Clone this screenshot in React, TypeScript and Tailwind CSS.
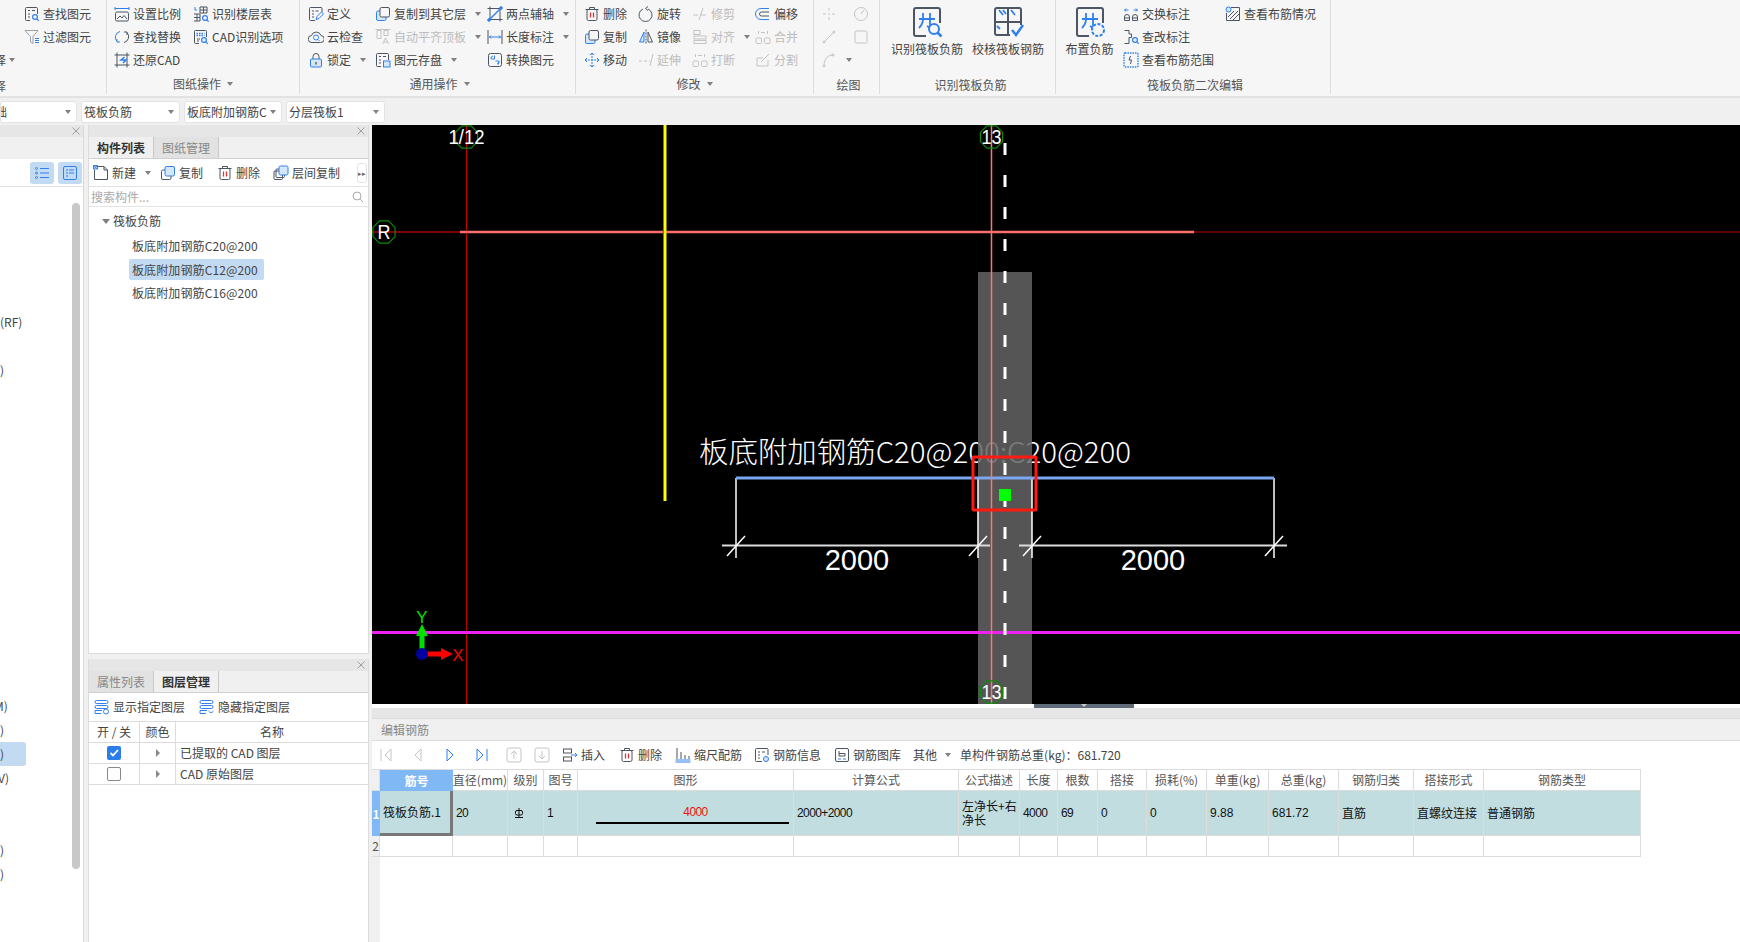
import React from "react";

const S = "#4b5563";
const B = "#2f80ed";
const G = "#c4c4c4";
const R = "#d9363e";

const Svg = ({ children, size = 16, stroke = S }: { children: React.ReactNode; size?: number; stroke?: string }) => (
  <svg width={size} height={size} viewBox="0 0 16 16" fill="none" stroke={stroke} strokeWidth={1} className="shrink-0">
    {children}
  </svg>
);

const Lens = ({ x = 11, y = 11 }: { x?: number; y?: number }) => (
  <g stroke={B} strokeWidth={1.2}>
    <circle cx={x} cy={y} r={2.4} fill="#f5f5f5" />
    <path d={`M${x + 1.8} ${y + 1.8}l2 2`} />
  </g>
);

const icons: Record<string, React.ReactNode> = {
  find: (
    <>
      <path d="M6 14.500H2.500a1 1 0 0 1-1-1v-11a1 1 0 0 1 1-1h10a1 1 0 0 1 1 1V8" />
      <path d="M4 4.500h2M8 4.500h3M4 8h2M4 11h2" />
      <Lens />
    </>
  ),
  filter: (
    <>
      <path d="M1 1.500h13L9 7.500v7l-2.500-1.500V7.500z" stroke="#9aa3ad" />
      <path d="M11 9.500h4M11 11.500h4M11 13.500h4" stroke={B} />
    </>
  ),
  scale: (
    <>
      <path d="M1 1v3M15 1v3M1 2.500h14" stroke={B} />
      <rect x="1.500" y="6" width="13" height="9" rx="1.500" />
      <path d="M3 13l3-3 2 2 2-2.500 3 3.500" />
    </>
  ),
  floor: (
    <>
      <path d="M2 1v3h2" stroke={B} />
      <path d="M7 1h7v6H7zM10.500 1v6M7 4h7M1 8h6v7H1M1 11.500h6M4 8v7" />
      <Lens x={12} y={12} />
    </>
  ),
  replace: (
    <>
      <path d="M6 2.500A6 6 0 0 0 3 12.500" stroke={B} />
      <path d="M10 13.500A6 6 0 0 0 13 3.500" />
      <path d="M3 10v3h3" stroke={B} />
      <path d="M13 6V3h-3" />
    </>
  ),
  cadopt: (
    <>
      <path d="M6 14.500H2.500a1 1 0 0 1-1-1v-11a1 1 0 0 1 1-1h10a1 1 0 0 1 1 1V8" />
      <path d="M3.500 4.500h8M3.500 6.500h8" stroke={B} strokeWidth={1.400} strokeDasharray="1.500 1" />
      <path d="M4 10h3M4 12h2" />
      <Lens />
    </>
  ),
  restore: (
    <>
      <path d="M3 0.500v15M13 0.500v15M0.500 3h15M0.500 13h15" />
      <path d="M10.500 5L7 8h5L9 11" stroke={B} strokeWidth={1.500} />
    </>
  ),
  define: (
    <>
      <path d="M14 6V2.500a1 1 0 0 0-1-1H2.500a1 1 0 0 0-1 1v11a1 1 0 0 0 1 1H7" />
      <path d="M4 5h2M7.500 5h3M4 8h2M4 11h2" />
      <path d="M8 13.500l1-3 4.500-4.500 2 2-4.500 4.500z" stroke={B} />
    </>
  ),
  cloud: (
    <>
      <path d="M4 13.500a3.500 3.500 0 0 1-.500-7A5 5 0 0 1 13 6.500a3.500 3.500 0 0 1-.500 7z" />
      <circle cx="8" cy="8.500" r="2.500" stroke={B} />
      <path d="M10 10.500l1.500 1.500" stroke={B} />
    </>
  ),
  lock: (
    <>
      <path d="M5 7V4.500a3 3 0 0 1 6 0V7" />
      <rect x="2.500" y="7" width="11" height="8" rx="1" fill="#d6e6fa" stroke={B} />
      <path d="M8 10v2.500" stroke={S} strokeWidth={1.400} />
    </>
  ),
  copy: (
    <>
      <rect x="1.500" y="5" width="9.500" height="9.500" rx="1.500" fill="#d6e6fa" stroke={B} />
      <rect x="5" y="1.500" width="9.500" height="9.500" rx="1.500" fill="#f6f6f6" stroke={S} />
    </>
  ),
  copyB: (
    <>
      <rect x="1.500" y="5" width="9.500" height="9.500" rx="1.500" />
      <rect x="5" y="1.500" width="9.500" height="9.500" rx="1.500" fill="#d6e6fa" stroke={B} />
    </>
  ),
  auto: <path d="M2 1.500h4v8H2zM9 1.500h4v5H9zM0.500 0.500h15M7.500 15l3-6 3 6M9 13h3" stroke={G} />,
  save: (
    <>
      <path d="M6 14.500H2.500a1 1 0 0 1-1-1v-11a1 1 0 0 1 1-1h10a1 1 0 0 1 1 1V8" />
      <path d="M4 4.500h2M8 4.500h3M4 8h2M4 11h2" />
      <rect x="8.500" y="9" width="6.500" height="6" fill="#d6e6fa" stroke={B} />
    </>
  ),
  axis: (
    <>
      <path d="M3 0.500V13.500H15.500M0.500 2.500H13V15.500" stroke={S} />
      <path d="M2 14L14 2" stroke={B} strokeWidth={1.500} />
      <circle cx="2" cy="14" r="1.300" fill={B} stroke={B} />
      <circle cx="14" cy="2" r="1.300" fill={B} stroke={B} />
    </>
  ),
  dim: (
    <>
      <path d="M1 1v14M15 1v14" stroke={S} />
      <path d="M2 8h12M4 6.500L2.500 8 4 9.500M12 6.500L13.500 8 12 9.500" stroke={B} />
    </>
  ),
  convert: (
    <>
      <rect x="1.500" y="1.500" width="13" height="13" rx="2" />
      <path d="M7.500 3.500v3.500h-3M4 7a2.500 2.500 0 0 1 2-3M8.500 9h3v3.500M12 9a2.500 2.500 0 0 1-2 3" stroke={B} />
    </>
  ),
  trash: (
    <>
      <path d="M1.500 3.500h13M5.500 3.500v-2h5v2" />
      <rect x="3" y="3.500" width="10" height="11" rx="1.500" />
      <path d="M6.500 6.500v5M9.500 6.500v5" stroke={R} strokeWidth={1.300} />
    </>
  ),
  rotate: (
    <>
      <path d="M5 3a6.500 6.500 0 1 0 5 0" />
      <path d="M10 0.500L7.500 2.500 10 4.500" stroke={S} />
    </>
  ),
  trim: <path d="M1 9h5M8 9h6M11 2L7 14" stroke={G} />,
  mirror: (
    <>
      <path d="M8 0.500v15" strokeDasharray="2 1" />
      <path d="M6 3v10H1.500z" fill="#d6e6fa" stroke={B} />
      <path d="M10 3v10h4.500z" />
    </>
  ),
  align: (
    <>
      <rect x="2" y="1.500" width="6" height="4" stroke={G} />
      <rect x="2" y="7" width="12" height="3" stroke={G} />
      <rect x="2" y="11.500" width="12" height="3" stroke={G} />
    </>
  ),
  merge: (
    <>
      <rect x="1" y="9" width="5.500" height="5.500" rx="1" stroke={G} />
      <rect x="9.500" y="9" width="5.500" height="5.500" rx="1" stroke={G} />
      <path d="M3.500 2v3M12.500 2v3M6 3.500h4" stroke={G} />
    </>
  ),
  move: (
    <>
      <path d="M8 1v14M1 8h14" stroke={B} strokeDasharray="2 1" />
      <path d="M6 3l2-2 2 2M6 13l2 2 2-2M3 6L1 8l2 2M13 6l2 2-2 2" stroke={B} />
    </>
  ),
  extend: <path d="M1 9h3M6 9h3M11 9h1M15 2l-3 12" stroke={G} />,
  split: (
    <>
      <path d="M13 8v6H2V6h6" stroke={G} />
      <path d="M6 10l8-8" stroke={G} />
    </>
  ),
  offset: (
    <>
      <path d="M14 2.500H6a5.500 5.500 0 0 0 0 11h8" stroke={B} />
      <path d="M14 6H6.500a2 2 0 0 0 0 4H14" stroke={S} />
    </>
  ),
  exchange: (
    <>
      <path d="M1.500 4h4M3 2.500L1.500 4 3 5.500M14.500 4h-4M13 2.500L14.500 4 13 5.500" stroke={B} />
      <path d="M1.500 14.500V11a2.500 2.500 0 0 1 5 0v3.500zM1.500 12h5M9.500 14.500V11a2.500 2.500 0 0 1 5 0v3.500zM9.500 12h5" />
    </>
  ),
  inspect: (
    <>
      <path d="M1.500 1.500h4.500v3.500h2.500v3.500H6v6H1.500" />
      <Lens x={12} y={11} />
    </>
  ),
  range: (
    <>
      <rect x="1" y="1" width="14" height="14" rx="1" stroke={B} strokeDasharray="1.500 1" strokeWidth={1.400} />
      <path d="M7.500 4L6 8h2.500L7.500 12" />
    </>
  ),
  status: (
    <>
      <path d="M6 1.500H14.500v13h-13V7" />
      <path d="M5 13l8-8M8 14l6-6M3 11l6-6" />
      <circle cx="3.500" cy="3.500" r="2.500" fill="#d6e6fa" stroke={B} />
    </>
  ),
  dot: <path d="M8 2v3M8 11v3M2 8h3M11 8h3M7 8h2" stroke={G} />,
  gauge: (
    <>
      <circle cx="8" cy="8" r="6.500" stroke={G} />
      <path d="M8 8l3-4" stroke={G} />
    </>
  ),
  line: (
    <>
      <path d="M3 13L13 3" stroke={G} />
      <circle cx="3" cy="13" r="1" stroke={G} />
      <circle cx="13" cy="3" r="1" stroke={G} />
    </>
  ),
  box: <rect x="2" y="2" width="12" height="12" rx="1.500" stroke={G} />,
  arc: (
    <>
      <path d="M3 14C3 8 6 3 12 3" stroke={G} />
      <circle cx="3" cy="14" r="1" stroke={G} />
      <circle cx="12" cy="3" r="1" stroke={G} />
    </>
  ),
  insert: (
    <>
      <rect x="1.500" y="2" width="8" height="4" />
      <rect x="1.500" y="10" width="8" height="4" />
      <path d="M9 8h6M13 6l2 2-2 2" stroke={B} />
    </>
  ),
  ruler: (
    <>
      <path d="M2 1v11M6 5v7M10 8v4M14 9v3" />
      <path d="M0.500 13h15M0.500 15h15" stroke={B} />
    </>
  ),
  info: (
    <>
      <path d="M14 8V2.500a1 1 0 0 0-1-1H2.500a1 1 0 0 0-1 1v11a1 1 0 0 0 1 1H8" />
      <path d="M4 5h2M8 5h3M4 8h2M4 11h2" />
      <circle cx="12" cy="12" r="2.500" fill="#d6e6fa" stroke={B} />
    </>
  ),
  lib: (
    <>
      <rect x="1.500" y="1.500" width="13" height="13" rx="1.500" />
      <path d="M5 4v5h6v-2.500H5" />
      <path d="M4 12h3M9 12h3" stroke={B} />
    </>
  ),
  newdoc: (
    <>
      <path d="M4 1.500h7l3.500 3.500v9.500H1.500V5" />
      <path d="M11 1.500V5h3.500" />
      <path d="M0.500 0.500h4v3.500h-4zM0.500 0.500l4 3.500M4.500 0.500l-4 3.500" stroke={B} />
    </>
  ),
  floorcopy: (
    <>
      <rect x="1" y="6" width="8.500" height="8.500" rx="1" />
      <rect x="3" y="4" width="8.500" height="8.500" rx="1" />
      <rect x="6" y="1" width="9" height="9" rx="1.500" fill="#d6e6fa" stroke={B} />
    </>
  ),
  listA: (
    <>
      <path d="M6 3.500h9M6 8h9M6 12.500h9" stroke={B} />
      <circle cx="2.500" cy="3.500" r="1" stroke={B} />
      <circle cx="2.500" cy="8" r="1" stroke={B} />
      <circle cx="2.500" cy="12.500" r="1" stroke={B} />
    </>
  ),
  listB: (
    <>
      <rect x="1.500" y="1.500" width="13" height="13" rx="1.500" stroke={B} />
      <path d="M4 5h2M7 5h5M4 8h2M7 8h5M4 11h2" stroke={B} />
    </>
  ),
  show: (
    <>
      <rect x="1" y="1.500" width="13" height="3" rx="1.500" stroke={B} />
      <rect x="1" y="6.500" width="13" height="3" rx="1.500" stroke={B} />
      <path d="M8 11.500H1v3h6" stroke={B} />
      <circle cx="12" cy="12.500" r="2.500" stroke={B} />
    </>
  ),
  hide: (
    <>
      <rect x="1" y="1.500" width="13" height="3" rx="1.500" stroke={B} />
      <rect x="1" y="6.500" width="13" height="3" rx="1.500" stroke={B} />
      <path d="M8 11.500H1v3h6M9.500 12c1.500 2 3.500 2 5 0" stroke={B} />
    </>
  ),
  navFirst: <path d="M3 2v12M13 2L7 8l6 6z" stroke={G} />,
  navPrev: <path d="M11 2L5 8l6 6z" stroke={G} />,
  navNext: <path d="M5 2l6 6-6 6z" stroke={B} />,
  navLast: <path d="M13 2v12M3 2l6 6-6 6z" stroke={B} />,
  up: (
    <>
      <rect x="1" y="1" width="14" height="14" rx="2" stroke={G} />
      <path d="M8 12V4M5 7l3-3 3 3" stroke={G} />
    </>
  ),
  down: (
    <>
      <rect x="1" y="1" width="14" height="14" rx="2" stroke={G} />
      <path d="M8 4v8M5 9l3 3 3-3" stroke={G} />
    </>
  ),
};

const Caret = ({ className = "ml-[6px]" }: { className?: string }) => (
  <span className={`inline-block h-0 w-0 border-x-[3px] border-t-[4px] border-x-transparent border-t-[#808080] ${className}`} />
);

const Tool = ({ icon, label, off, caret }: { icon: string; label?: string; off?: boolean; caret?: boolean }) => (
  <div className={`flex h-[23px] items-center gap-[3px] whitespace-nowrap ${off ? "text-[#bcbcbc]" : "text-[#444]"}`}>
    <Svg>{icons[icon]}</Svg>
    {label && <span>{label}</span>}
    {caret && <Caret />}
  </div>
);

const Col = ({ w, children }: { w: string; children: React.ReactNode }) => <div className={`flex flex-col ${w}`}>{children}</div>;

const Group = ({ w, label, caret, labelCls = "", children }: { w: string; label: string; caret?: boolean; labelCls?: string; children: React.ReactNode }) => (
  <div className={`flex h-[94px] shrink-0 flex-col border-r border-[#dcdcdc] ${w}`}>
    <div className="flex h-[74px] pt-[2px]">{children}</div>
    <div className={`flex h-[20px] items-center justify-center text-[#555] ${labelCls}`}>
      {label}
      {caret && <Caret />}
    </div>
  </div>
);

const Big = ({ w, label, kind }: { w: string; label: string; kind: "find" | "check" | "set" }) => (
  <div className={`flex flex-col items-center pt-[3px] text-[#444] ${w}`}>
    <svg width="34" height="34" viewBox="0 0 34 34" fill="none" stroke={S} strokeWidth={2}>
      {kind === "check" ? (
        <>
          <path d="M19 30H6a2 2 0 0 1-2-2V5a2 2 0 0 1 2-2h22a2 2 0 0 1 2 2v15M4 17h26M17 3v27" />
          <path d="M8 5l4 5M12 5l3 4M20 5l4 5M6 21l3 3" stroke={B} strokeWidth={1.800} />
          <path d="M21 25l4 5 7-10" stroke={B} strokeWidth={2.500} />
        </>
      ) : (
        <>
          <path d="M16 31H6a2 2 0 0 1-2-2V5a2 2 0 0 1 2-2h22a2 2 0 0 1 2 2v13" />
          <path d="M9 14h16M13 8v6c0 5-2 7-4 9M20 8v15l-3-2" stroke={B} strokeWidth={1.800} />
          {kind === "find" ? (
            <>
              <circle cx="24" cy="24" r="5" stroke={B} strokeWidth={2} fill="#f6f6f6" />
              <path d="M27.500 27.500l4 4" stroke={B} strokeWidth={2.500} />
            </>
          ) : (
            <>
              <circle cx="25" cy="25" r="2.500" stroke={B} strokeWidth={1.500} />
              <circle cx="25" cy="25" r="6" stroke={B} strokeWidth={2} strokeDasharray="3 1.500" fill="#f6f6f6" />
            </>
          )}
        </>
      )}
    </svg>
    <span className="mt-[1px] whitespace-nowrap">{label}</span>
  </div>
);

const Ribbon = () => (
  <div className="flex h-[98px] shrink-0 border-b-2 border-[#e2e2e2] bg-[#f6f6f6] text-[12px]">
    <div className="flex h-[94px] w-[107px] shrink-0 flex-col overflow-hidden border-r border-[#dcdcdc] pt-[2px] text-[#444]">
      <div className="flex h-[75px] flex-col pl-[24px]">
        <Tool icon="find" label="查找图元" />
        <Tool icon="filter" label="过滤图元" />
        <div className="-ml-[30px] flex h-[23px] items-center">
          择<Caret className="ml-[3px]" />
        </div>
      </div>
      <div className="-ml-[6px] flex h-[17px] items-center text-[#555]">择</div>
    </div>
    <Group w="w-[193px]" label="图纸操作" caret>
      <div className="flex pl-[7px]">
        <Col w="w-[79px]">
          <Tool icon="scale" label="设置比例" />
          <Tool icon="replace" label="查找替换" />
          <Tool icon="restore" label="还原CAD" />
        </Col>
        <Col w="w-[100px]">
          <Tool icon="floor" label="识别楼层表" />
          <Tool icon="cadopt" label="CAD识别选项" />
        </Col>
      </div>
    </Group>
    <Group w="w-[276px]" label="通用操作" caret labelCls="pl-[4px]">
      <div className="flex pl-[8px]">
        <Col w="w-[67px]">
          <Tool icon="define" label="定义" />
          <Tool icon="cloud" label="云检查" />
          <Tool icon="lock" label="锁定" caret />
        </Col>
        <Col w="w-[112px]">
          <Tool icon="copy" label="复制到其它层" caret />
          <Tool icon="auto" label="自动平齐顶板" off caret />
          <Tool icon="save" label="图元存盘" caret />
        </Col>
        <Col w="w-[85px]">
          <Tool icon="axis" label="两点辅轴" caret />
          <Tool icon="dim" label="长度标注" caret />
          <Tool icon="convert" label="转换图元" />
        </Col>
      </div>
    </Group>
    <Group w="w-[238px]" label="修改" caret>
      <div className="flex pl-[8px]">
        <Col w="w-[54px]">
          <Tool icon="trash" label="删除" />
          <Tool icon="copy" label="复制" />
          <Tool icon="move" label="移动" />
        </Col>
        <Col w="w-[54px]">
          <Tool icon="rotate" label="旋转" />
          <Tool icon="mirror" label="镜像" />
          <Tool icon="extend" label="延伸" off />
        </Col>
        <Col w="w-[63px]">
          <Tool icon="trim" label="修剪" off />
          <Tool icon="align" label="对齐" off caret />
          <Tool icon="merge" label="打断" off />
        </Col>
        <Col w="w-[50px]">
          <Tool icon="offset" label="偏移" />
          <Tool icon="merge" label="合并" off />
          <Tool icon="split" label="分割" off />
        </Col>
      </div>
    </Group>
    <Group w="w-[66px]" label="绘图" labelCls="pl-[4px] pt-[2px]">
      <div className="flex gap-[16px] pl-[7px]">
        <Col w="w-[16px]">
          <Tool icon="dot" off />
          <Tool icon="line" off />
          <Tool icon="arc" off caret />
        </Col>
        <Col w="w-[16px]">
          <Tool icon="gauge" off />
          <Tool icon="box" off />
        </Col>
      </div>
    </Group>
    <Group w="w-[176px]" label="识别筏板负筋" labelCls="pl-[6px] pt-[2px]">
      <div className="flex pl-[7px]">
        <Big w="w-[80px]" label="识别筏板负筋" kind="find" />
        <Big w="w-[82px]" label="校核筏板钢筋" kind="check" />
      </div>
    </Group>
    <Group w="w-[275px]" label="筏板负筋二次编辑" labelCls="pl-[4px] pt-[2px]">
      <div className="flex">
        <Big w="w-[67px]" label="布置负筋" kind="set" />
        <Col w="w-[102px]">
          <Tool icon="exchange" label="交换标注" />
          <Tool icon="inspect" label="查改标注" />
          <Tool icon="range" label="查看布筋范围" />
        </Col>
        <Col w="w-[100px]">
          <Tool icon="status" label="查看布筋情况" />
        </Col>
      </div>
    </Group>
  </div>
);

const Combo = ({ w, label, clip }: { w: string; label: string; clip?: boolean }) => (
  <div className={`flex h-[22px] items-center justify-between overflow-hidden rounded-[3px] border border-[#e3e3e3] bg-white pr-[5px] text-[12px] text-[#444] ${clip ? "" : "pl-[2px]"} ${w}`}>
    <span className={`whitespace-nowrap ${clip ? "-ml-[6px]" : ""}`}>{label}</span>
    <Caret className="ml-0 shrink-0" />
  </div>
);

const ComboRow = () => (
  <div className="flex h-[27px] shrink-0 items-center gap-[4px] bg-[#f0f0f0]">
    <Combo w="w-[77px]" label="础" clip />
    <Combo w="w-[99px]" label="筏板负筋" />
    <Combo w="w-[98px]" label="板底附加钢筋C" />
    <Combo w="w-[99px]" label="分层筏板1" />
  </div>
);

const Close = () => (
  <svg width="8" height="8" viewBox="0 0 8 8" stroke="#a0a0a0" className="shrink-0">
    <path d="M0.500 0.500l7 7M7.500 0.500l-7 7" />
  </svg>
);

const PanelHead = () => (
  <div className="flex h-[12px] shrink-0 items-center justify-end bg-[#e6e6e6] pr-[3px]">
    <Close />
  </div>
);

const Tabs = ({ active, items }: { active: number; items: string[] }) => (
  <div className="flex h-[22px] shrink-0 border-b border-[#d0d0d0] bg-[#f0f0f0] text-[12px]">
    {items.map((t, i) => (
      <div
        key={t}
        className={
          i === active
            ? "flex w-[65px] items-center justify-center border-r border-[#c8c8c8] bg-[#f0f0f0] font-bold text-[#333]"
            : "flex w-[65px] items-center justify-center border-r border-[#c8c8c8] bg-[#e2e2e2] text-[#888]"
        }
      >
        {t}
      </div>
    ))}
  </div>
);

const leftRows: { top: string; text: string; cls: string }[] = [
  { top: "mt-[123px]", text: "(RF)", cls: "ml-0" },
  { top: "mt-[24px]", text: ")", cls: "ml-0" },
  { top: "mt-[312px]", text: "M)", cls: "-ml-[6px]" },
  { top: "mt-0", text: ")", cls: "ml-0" },
  { top: "mt-0", text: ")", cls: "ml-0 sel" },
  { top: "mt-0", text: "V)", cls: "-ml-[2px]" },
  { top: "mt-[48px]", text: ")", cls: "ml-0" },
  { top: "mt-0", text: ")", cls: "ml-0" },
];

const LeftPanel = () => (
  <div className="relative flex w-[84px] shrink-0 flex-col overflow-hidden border-r border-[#d8d8d8] bg-white text-[12px] text-[#444]">
    <PanelHead />
    <div className="h-[22px] shrink-0 bg-[#f0f0f0]" />
    <div className="flex h-[28px] shrink-0 items-center justify-end gap-[4px] border-b border-[#e2e2e2] pr-[1px]">
      <div className="flex h-[22px] w-[24px] items-center justify-center rounded-[3px] bg-[#c3daf3]">
        <Svg>{icons.listA}</Svg>
      </div>
      <div className="flex h-[22px] w-[24px] items-center justify-center rounded-[3px] bg-[#c3daf3]">
        <Svg>{icons.listB}</Svg>
      </div>
    </div>
    {leftRows.map((r, i) => (
      <div
        key={i}
        className={`flex h-[24px] items-center ${r.top} ${r.cls.includes("sel") ? "w-[26px] rounded-r-[3px] bg-[#c3daf3]" : ""}`}
      >
        <span className={r.cls.replace(" sel", "")}>{r.text}</span>
      </div>
    ))}
    <div className="absolute left-[72px] top-[78px] h-[666px] w-[8px] rounded-[4px] bg-[#c8c8c8]" />
  </div>
);

const ComponentPanel = () => (
  <div className="flex h-[529px] shrink-0 flex-col border-x border-b border-[#dcdcdc] bg-white text-[12px] text-[#444]">
    <PanelHead />
    <Tabs active={0} items={["构件列表", "图纸管理"]} />
    <div className="flex h-[28px] shrink-0 items-center border-b border-[#e4e4e4] pl-[4px] pt-[1px]">
      <Tool icon="newdoc" label="新建" caret />
      <div className="ml-[9px]">
        <Tool icon="copyB" label="复制" />
      </div>
      <div className="ml-[14px]">
        <Tool icon="trash" label="删除" />
      </div>
      <div className="ml-[13px]">
        <Tool icon="floorcopy" label="层间复制" />
      </div>
      <div className="ml-[17px] flex h-[20px] w-[10px] items-center justify-center rounded-[3px] border border-[#e4e4e4] text-[7px] text-[#666]">▸▸</div>
    </div>
    <div className="flex h-[20px] shrink-0 items-center justify-between border-b border-[#e4e4e4] px-[2px] pr-[4px] text-[#aaa]">
      <span>搜索构件...</span>
      <svg width="12" height="12" viewBox="0 0 12 12" fill="none" stroke="#aaa">
        <circle cx="5" cy="5" r="4" />
        <path d="M8 8l3 3" />
      </svg>
    </div>
    <div className="flex h-[28px] items-center pl-[13px]">
      <Caret className="ml-0 mr-[3px] border-x-[4px] border-t-[5px]" />
      筏板负筋
    </div>
    <div className="flex h-[21px] items-center pl-[43px] tracking-[0.12px]">板底附加钢筋C20@200</div>
    <div className="ml-[40px] mt-[3px] flex h-[21px] w-[135px] items-center rounded-[2px] bg-[#c3daf3] pl-[3px] tracking-[0.12px]">板底附加钢筋C12@200</div>
    <div className="mt-[2px] flex h-[22px] items-center pl-[43px] tracking-[0.12px]">板底附加钢筋C16@200</div>
  </div>
);

const LayerPanel = () => (
  <div className="mt-[5px] flex min-h-0 flex-1 flex-col border-x border-[#dcdcdc] bg-white text-[12px] text-[#444]">
    <PanelHead />
    <Tabs active={1} items={["属性列表", "图层管理"]} />
    <div className="flex h-[28px] shrink-0 items-center gap-[14px] pl-[5px]">
      <Tool icon="show" label="显示指定图层" />
      <Tool icon="hide" label="隐藏指定图层" />
    </div>
    <div className="grid grid-cols-[51px_36px_1fr] border-y border-[#dcdcdc]">
      <div className="flex h-[20px] items-center justify-center border-r border-[#dcdcdc]">开 / 关</div>
      <div className="flex h-[20px] items-center justify-center border-r border-[#dcdcdc]">颜色</div>
      <div className="flex h-[20px] items-center justify-center">名称</div>
    </div>
    {[
      { on: true, name: "已提取的 CAD 图层" },
      { on: false, name: "CAD 原始图层" },
    ].map((r) => (
      <div key={r.name} className="grid h-[21px] grid-cols-[51px_36px_1fr] border-b border-[#dcdcdc]">
        <div className="flex items-center justify-center border-r border-[#dcdcdc]">
          {r.on ? (
            <div className="flex h-[14px] w-[14px] items-center justify-center rounded-[2px] bg-[#2b7de9]">
              <svg width="10" height="10" viewBox="0 0 10 10" fill="none" stroke="white" strokeWidth={1.800}>
                <path d="M1.500 5l2.500 2.500 5-5.500" />
              </svg>
            </div>
          ) : (
            <div className="h-[14px] w-[14px] rounded-[2px] border border-[#888]" />
          )}
        </div>
        <div className="flex items-center justify-center border-r border-[#dcdcdc]">
          <span className="h-0 w-0 border-y-[4px] border-l-[4px] border-y-transparent border-l-[#888]" />
        </div>
        <div className="flex items-center pl-[4px]">{r.name}</div>
      </div>
    ))}
  </div>
);

const Bubble = ({ cx, cy, text, w }: { cx: number; cy: number; text: string; w: number }) => {
  const pts = Array.from({ length: 8 }, (_, i) => {
    const a = Math.PI / 8 + (i * Math.PI) / 4;
    return `${cx + 12 * Math.cos(a)},${cy + 12 * Math.sin(a)}`;
  }).join(" ");
  return (
    <>
      <polygon points={pts} fill="none" stroke="#0c8a0c" strokeWidth={1.200} />
      <text x={cx} y={cy + 7} textAnchor="middle" fill="#fff" fontSize="20" fontFamily="Liberation Sans" textLength={w} lengthAdjust="spacingAndGlyphs">
        {text}
      </text>
    </>
  );
};

const Tick = ({ x }: { x: number }) => <path d={`M${x - 9} 556L${x + 9} 536`} stroke="#fff" strokeWidth={1.500} />;

const Canvas = () => (
  <div className="h-[579px] shrink-0 bg-black">
    <svg width="1368" height="579" viewBox="372 125 1368 579" className="block">
      <path d="M466.500 125V704" stroke="#c00000" />
      <path d="M372 232H460" stroke="#800000" strokeWidth={2} />
      <path d="M1194 232H1740" stroke="#800000" strokeWidth={1.500} />
      <path d="M460 232H1194" stroke="#ff6d6d" strokeWidth={2.500} />
      <path d="M665 125V501" stroke="#ffff00" strokeWidth={3} />
      <path d="M663.500 125V501" stroke="#808000" />
      <text x="699" y="463" fill="#fff" fontSize="29" fontFamily="Noto Sans CJK SC" fontWeight="300" textLength="432" lengthAdjust="spacingAndGlyphs">
        板底附加钢筋C20@200:C20@200
      </text>
      <rect x="978" y="272" width="54" height="432" fill="#646464" fillOpacity={0.85} />
      <path d="M736 478V558M978 478V558M1032 478V558M1274 478V558" stroke="#fff" strokeWidth={1.500} />
      <path d="M736 478H1274" stroke="#7aa7f0" strokeWidth={3} />
      <path d="M722 545.500H990M1019 545.500H1287" stroke="#dcdcdc" strokeWidth={2} />
      <Tick x={736} />
      <Tick x={978} />
      <Tick x={1032} />
      <Tick x={1274} />
      <text x="857" y="570" fill="#fff" fontSize="29" textAnchor="middle" fontFamily="Liberation Sans">2000</text>
      <text x="1153" y="570" fill="#fff" fontSize="29" textAnchor="middle" fontFamily="Liberation Sans">2000</text>
      <path d="M372 632.500H1740" stroke="#f020f0" strokeWidth={3} />
      <path d="M991.500 125V704" stroke="#ff7575" strokeWidth={1.500} />
      <path d="M1005 143V704" stroke="#fff" strokeWidth={3} strokeDasharray="12 20" />
      <rect x="973" y="457" width="63" height="53" rx="1" fill="none" stroke="#ff1a10" strokeWidth={3} />
      <rect x="999" y="489" width="12" height="12" fill="#00ff00" />
      <Bubble cx={384} cy={232} text="R" w={13} />
      <Bubble cx={466.500} cy={137} text="1/12" w={36} />
      <Bubble cx={991.500} cy={137} text="13" w={20} />
      <Bubble cx={991.500} cy={692} text="13" w={20} />
      <path d="M422 654V634" stroke="#00e000" strokeWidth={5} />
      <path d="M416 636L422 624 428 636z" fill="#00e000" />
      <path d="M422 654H442" stroke="#ff0000" strokeWidth={5} />
      <path d="M441 648L453 654 441 660z" fill="#ff0000" />
      <circle cx="422" cy="654" r="6" fill="#0000a0" />
      <text x="422" y="623" fill="#00e000" fontSize="17" textAnchor="middle" fontFamily="Liberation Sans">Y</text>
      <text x="458" y="661" fill="#ff0000" fontSize="17" textAnchor="middle" fontFamily="Liberation Sans">X</text>
    </svg>
  </div>
);

const cols = "grid grid-cols-[8px_73px_55px_36px_34px_216px_165px_61px_38px_40px_49px_60px_62px_70px_75px_70px_157px]";
const heads = ["直径(mm)", "级别", "图号", "图形", "计算公式", "公式描述", "长度", "根数", "搭接", "损耗(%)", "单重(kg)", "总重(kg)", "钢筋归类", "搭接形式", "钢筋类型"];
const cell = "border-r border-b border-[#dcdcdc]";
const digits = "font-['Liberation_Sans',sans-serif] text-[12px] tracking-[-0.6px]";
const decimals = "font-['Liberation_Sans',sans-serif] text-[12px]";

const SteelMark = () => (
  <svg width="10" height="12" viewBox="0 0 10 12" fill="none" stroke="#111">
    <path d="M5 1v10M1 10.500h8" />
    <rect x="1.500" y="3.500" width="7" height="4.500" rx="1.500" />
  </svg>
);

const NumCell = ({ text, wide }: { text: string; wide?: boolean }) => <div className={`flex items-center pl-[3px] ${cell} ${wide ? decimals : digits}`}>{text}</div>;
const TextCell = ({ text }: { text: string }) => <div className={`flex items-center pl-[3px] ${cell}`}>{text}</div>;

const RebarTable = () => (
  <div className="flex min-h-0 flex-1 bg-white text-[12px]">
    <div className="flex w-full flex-col">
      <div className={`${cols} h-[22px] w-max border-t border-[#dcdcdc] text-[#555]`}>
        <div className={`bg-[#f0f0f0] ${cell}`} />
        <div className="flex items-center justify-center bg-[#7fb8f5] font-bold text-white">筋号</div>
        {heads.map((h) => (
          <div key={h} className={`flex items-center justify-center whitespace-nowrap ${cell}`}>
            {h}
          </div>
        ))}
      </div>
      <div className={`${cols} h-[45px] w-max bg-[#c1dde0] text-[#111]`}>
        <div className="flex items-center justify-center bg-[#7fb8f5] font-bold text-white">1</div>
        <div className="flex items-center border-b-[3px] border-r-[3px] border-[#777] pl-[3px] whitespace-nowrap">筏板负筋.1</div>
        <NumCell text="20" />
        <div className={`flex items-center pl-[6px] ${cell}`}>
          <SteelMark />
        </div>
        <NumCell text="1" />
        <div className={`flex flex-col justify-center ${cell}`}>
          <span className={`pl-[20px] text-center text-[#ee1111] ${digits}`}>4000</span>
          <div className="ml-[18px] mt-[1px] h-[2px] w-[193px] bg-black" />
        </div>
        <NumCell text="2000+2000" />
        <div className={`flex items-center pl-[3px] leading-[14px] whitespace-nowrap ${cell}`}>
          <span>
            左净长+右
            <br />
            净长
          </span>
        </div>
        <NumCell text="4000" />
        <NumCell text="69" />
        <NumCell text="0" />
        <NumCell text="0" />
        <NumCell text="9.88" wide />
        <NumCell text="681.72" wide />
        <TextCell text="直筋" />
        <TextCell text="直螺纹连接" />
        <TextCell text="普通钢筋" />
      </div>
      <div className={`${cols} h-[21px] w-max`}>
        <div className={`flex items-center justify-center bg-[#f0f0f0] text-[#555] ${cell}`}>2</div>
        {Array.from({ length: 16 }, (_, i) => (
          <div key={i} className={cell} />
        ))}
      </div>
      <div className="w-[8px] flex-1 bg-[#f0f0f0]" />
    </div>
  </div>
);

const BottomToolbar = () => (
  <div className="flex h-[28px] shrink-0 items-center whitespace-nowrap bg-white pl-[6px] text-[12px] text-[#444]">
    <div className="flex gap-[16px]">
      <Svg>{icons.navFirst}</Svg>
      <Svg>{icons.navPrev}</Svg>
      <Svg>{icons.navNext}</Svg>
      <Svg>{icons.navLast}</Svg>
    </div>
    <div className="ml-[16px] flex gap-[12px]">
      <Svg>{icons.up}</Svg>
      <Svg>{icons.down}</Svg>
    </div>
    <div className="ml-[12px]">
      <Tool icon="insert" label="插入" />
    </div>
    <div className="ml-[14px]">
      <Tool icon="trash" label="删除" />
    </div>
    <div className="ml-[13px]">
      <Tool icon="ruler" label="缩尺配筋" />
    </div>
    <div className="ml-[12px]">
      <Tool icon="info" label="钢筋信息" />
    </div>
    <div className="ml-[13px]">
      <Tool icon="lib" label="钢筋图库" />
    </div>
    <span className="ml-[12px]">其他</span>
    <Caret className="ml-[8px]" />
    <span className="ml-[9px]">单构件钢筋总重(kg)：681.720</span>
  </div>
);

const App = () => {
  return (
    <div className="flex h-[942px] w-[1740px] flex-col overflow-hidden bg-[#f0f0f0] font-['Noto_Sans_CJK_SC','Liberation_Sans',sans-serif]">
      <Ribbon />
      <ComboRow />
      <div className="flex min-h-0 flex-1">
        <LeftPanel />
        <div className="ml-[4px] flex w-[281px] shrink-0 flex-col">
          <ComponentPanel />
          <LayerPanel />
        </div>
        <div className="ml-[3px] flex min-w-0 flex-1 flex-col">
          <Canvas />
          <div className="flex h-[4px] shrink-0 bg-white pl-[662px]">
            <div className="flex h-[4px] w-[100px] justify-center bg-[#5f6b78]">
              <span className="h-0 w-0 border-x-[3px] border-t-[3px] border-x-transparent border-t-[#c8c8c8]" />
            </div>
          </div>
          <div className="h-[11px] shrink-0 border-b border-[#dcdcdc] bg-[#e6e6e6]" />
          <div className="flex h-[22px] shrink-0 items-center border-b border-[#dcdcdc] bg-[#f0f0f0] pl-[9px] text-[12px] text-[#888]">编辑钢筋</div>
          <BottomToolbar />
          <RebarTable />
        </div>
      </div>
    </div>
  );
};

export default App;
